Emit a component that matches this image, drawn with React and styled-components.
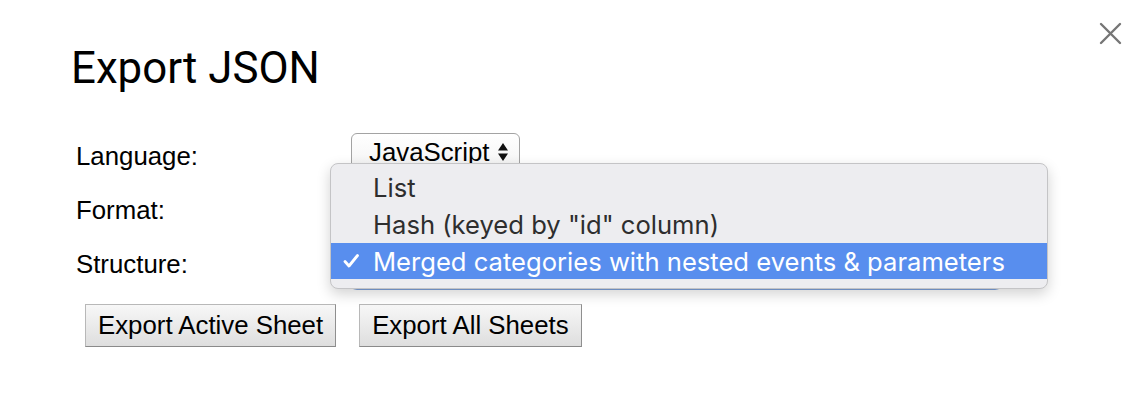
import React from "react";
import styled, { createGlobalStyle } from "styled-components";

const GlobalStyle = createGlobalStyle`
  html, body {
    margin: 0;
    padding: 0;
    background: #ffffff;
  }
  * {
    box-sizing: border-box;
  }
`;

const Dialog = styled.div`
  position: relative;
  width: 1136px;
  height: 416px;
  padding: 42px 0 0 71px;
  background: #ffffff;
  font-family: "Liberation Sans", Arial, sans-serif;
  color: #000;
  overflow: hidden;
`;

const CloseButton = styled.button`
  position: absolute;
  top: 20px;
  right: 12px;
  width: 27px;
  height: 27px;
  padding: 0;
  border: none;
  background: transparent;
  display: flex;
  align-items: center;
  justify-content: center;
`;

const Title = styled.h1`
  margin: 0;
  font-family: Roboto, "Liberation Sans", sans-serif;
  font-weight: 400;
  font-size: 43.8px;
  line-height: 52px;
  color: #000;
`;

const Form = styled.div`
  position: relative;
  margin-top: 35px;
  padding-left: 5px;
  display: grid;
  grid-template-columns: 275px 1fr;
  grid-auto-rows: 54px;
  width: 1000px;
`;

const Label = styled.div`
  font-size: 25.8px;
  line-height: 54px;
`;

const Field = styled.div`
  display: flex;
  align-items: center;
`;

const SelectBox = styled.div`
  height: ${(p) => p.$height || 38}px;
  width: ${(p) => (p.$width ? `${p.$width}px` : "auto")};
  margin-top: ${(p) => p.$offset || 0}px;
  padding: 0 10px 0 17px;
  display: flex;
  align-items: center;
  gap: 8px;
  border: 1px solid #a3a3a3;
  border-radius: 6px;
  background: linear-gradient(#ffffff, #f3f3f3);
  font-size: 25.8px;
  box-shadow: ${(p) => (p.$focused ? "0 0 0 3px #7fa3dc" : "none")};
`;

const Updown = styled.svg`
  display: block;
`;

const Popup = styled.ul`
  position: absolute;
  left: 259px;
  top: 34px;
  width: 718px;
  margin: 0;
  padding: 5px 0 9px;
  list-style: none;
  background: #ededf0;
  border: 1px solid #c4c4c6;
  border-radius: 8px;
  box-shadow: 0 5px 14px rgba(0, 0, 0, 0.18);
  font-family: Inter, "Noto Sans", sans-serif;
  font-size: 25.6px;
  z-index: 2;
`;

const Option = styled.li`
  position: relative;
  height: ${(p) => (p.$selected ? 36 : 37)}px;
  padding-left: 42px;
  display: flex;
  align-items: center;
  color: ${(p) => (p.$selected ? "#ffffff" : "#2e2e2e")};
  background: ${(p) => (p.$selected ? "#588eee" : "transparent")};
`;

const Check = styled.svg`
  position: absolute;
  left: 12px;
  top: 10px;
`;

const Actions = styled.div`
  margin-top: 13px;
  margin-left: 14px;
  display: flex;
  gap: 23px;
`;

const Button = styled.button`
  height: 43px;
  padding: 0 12px;
  font-family: "Liberation Sans", Arial, sans-serif;
  font-size: 25.8px;
  color: #000;
  background: linear-gradient(#f7f7f7, #dedede);
  border: 1px solid #b8b8b8;
  border-right-color: #8f8f8f;
  border-bottom-color: #8a8a8a;
  border-radius: 0;
`;

const options = [
  "List",
  'Hash (keyed by "id" column)',
  "Merged categories with nested events & parameters",
];

export default function App() {
  return (
    <>
      <GlobalStyle />
      <Dialog>
        <CloseButton aria-label="Close">
          <svg width="23" height="23" viewBox="0 0 23 23">
            <path
              d="M2 2 L21 21 M21 2 L2 21"
              stroke="#767676"
              strokeWidth="2.4"
              strokeLinecap="round"
            />
          </svg>
        </CloseButton>
        <Title>Export JSON</Title>
        <Form>
          <Label>Language:</Label>
          <Field>
            <SelectBox $offset={-8}>
              JavaScript
              <Updown width="12" height="20" viewBox="0 0 12 20">
                <path d="M6 1 L11 8.5 L1 8.5 Z M6 19 L11 11.5 L1 11.5 Z" fill="#111" />
              </Updown>
            </SelectBox>
          </Field>
          <Label>Format:</Label>
          <Field>
            <SelectBox $width={250} />
          </Field>
          <Label>Structure:</Label>
          <Field>
            <SelectBox $width={650} $height={44} $offset={2} $focused />
          </Field>
          <Popup>
            {options.map((o, i) => (
              <Option key={o} $selected={i === 2}>
                {i === 2 && (
                  <Check width="16" height="16" viewBox="0 0 16 16">
                    <path
                      d="M2 8.5 L6 13 L14.5 2.5"
                      fill="none"
                      stroke="#fff"
                      strokeWidth="2.8"
                      strokeLinecap="round"
                      strokeLinejoin="round"
                    />
                  </Check>
                )}
                {o}
              </Option>
            ))}
          </Popup>
        </Form>
        <Actions>
          <Button>Export Active Sheet</Button>
          <Button>Export All Sheets</Button>
        </Actions>
      </Dialog>
    </>
  );
}
